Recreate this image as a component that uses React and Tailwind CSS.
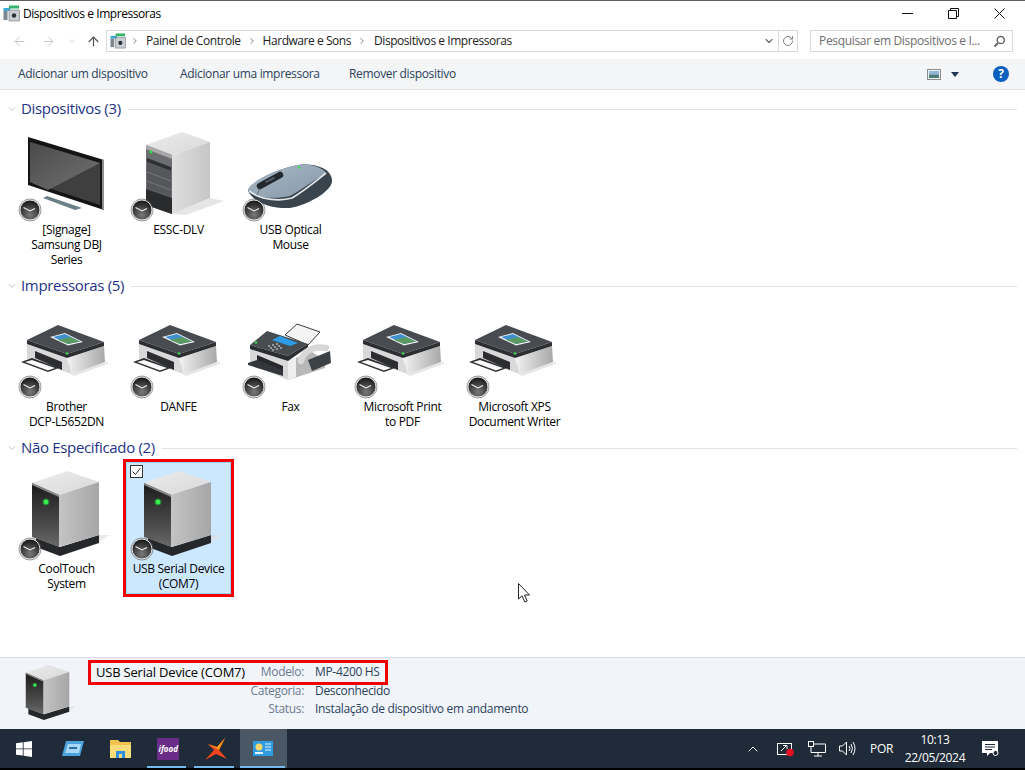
import React from 'react'
import { ArrowLeft, ArrowRight, ArrowUp, ChevronDown, ChevronRight, ChevronUp, RotateCw } from 'lucide-react'

const Defs = () => (
  <svg className="absolute w-0 h-0">
    <defs>
      <linearGradient id="screen" x1="0" y1="0" x2="1" y2="1">
        <stop offset="0" stopColor="#4a4a4a" />
        <stop offset="1" stopColor="#727272" />
      </linearGradient>
      <linearGradient id="side" x1="0" y1="0" x2="1" y2="0">
        <stop offset="0" stopColor="#c4c4c4" />
        <stop offset="1" stopColor="#a6a6a6" />
      </linearGradient>
      <linearGradient id="top" x1="0" y1="0" x2="1" y2="1">
        <stop offset="0" stopColor="#ececec" />
        <stop offset="1" stopColor="#d8d8da" />
      </linearGradient>
      <linearGradient id="front" x1="0" y1="0" x2="0" y2="1">
        <stop offset="0" stopColor="#1c1c1c" />
        <stop offset="0.7" stopColor="#4e4e4e" />
        <stop offset="1" stopColor="#6a6a6a" />
      </linearGradient>
      <linearGradient id="tower" x1="0" y1="0" x2="1" y2="0">
        <stop offset="0" stopColor="#dedede" />
        <stop offset="1" stopColor="#c6c6c6" />
      </linearGradient>
      <linearGradient id="printer" x1="0" y1="0" x2="1" y2="0">
        <stop offset="0" stopColor="#f2f2f2" />
        <stop offset="1" stopColor="#a8a8a8" />
      </linearGradient>
      <linearGradient id="mouse" x1="0" y1="0" x2="1" y2="1">
        <stop offset="0" stopColor="#a9b8c6" />
        <stop offset="1" stopColor="#8598a9" />
      </linearGradient>
      <radialGradient id="clock" cx="0.5" cy="0.75" r="0.75">
        <stop offset="0" stopColor="#7a7a7a" />
        <stop offset="1" stopColor="#121212" />
      </radialGradient>
    </defs>
  </svg>
)

const Badge = () => (
  <g>
    <circle cx="16" cy="87" r="10" fill="url(#clock)" stroke="#dcdcdc" strokeWidth="1" />
    <circle cx="16" cy="87" r="11" fill="none" stroke="#555" strokeWidth="0.6" />
    <path d="M9.5 84.5 L16 88 L21 85.5" fill="none" stroke="#f2f2f2" strokeWidth="1.1" />
  </g>
)

const MonitorIcon = () => (
  <svg width="106" height="100" viewBox="0 0 106 100" className="block">
    <polygon points="29,75 33,73 68,85 61,87" fill="#6d7f88" />
    <polygon points="14,14 90,37 90,87 14,62" fill="#141414" />
    <polygon points="88,37 90,37 90,87 88,86" fill="#8f8f8f" />
    <polygon points="16,19 86,40 86,82 16,59" fill="#3f3f3f" />
    <polygon points="16,19 86,40 34,67 16,59" fill="url(#screen)" />
    <Badge />
  </svg>
)

const ServerIcon = () => (
  <svg width="106" height="100" viewBox="0 0 106 100" className="block">
    <polygon points="46,91 84,75 98,78 60,92" fill="#e6e6e6" />
    <polygon points="20,22 56,9 84,19 46,32" fill="url(#top)" />
    <polygon points="46,32 84,19 84,75 46,91" fill="url(#tower)" />
    <polygon points="20,22 46,32 46,91 20,82" fill="#6b6d70" />
    <polygon points="20,22 46,32 46,36 20,26" fill="#a8a8a8" />
    <polygon points="21,35 45,44 45,48 21,39" fill="#2e3033" />
    <polygon points="21,39 45,48 45,74 21,66" fill="#55575b" />
    <path d="M21 49 L45 58 M21 58 L45 67" stroke="#7d7f83" strokeWidth="0.8" />
    <polygon points="20,66 46,75 46,91 20,82" fill="#2a2b2d" />
    <circle cx="25" cy="29" r="1.6" fill="#28e03a" />
    <Badge />
  </svg>
)

const MouseIcon = () => (
  <svg width="106" height="100" viewBox="0 0 106 100" className="block">
    <path d="M10 68 C16 56 40 46 60 42 C78 40 94 46 94 58 C94 68 70 82 52 85 C34 86 16 80 10 68 Z" fill="#3a444c" />
    <path d="M10 66 C16 56 40 46 60 42 C72 40 84 44 88 50 C78 56 66 65 52 73 C40 76 20 76 11 68 Z" fill="url(#mouse)" />
    <path d="M11 68 C24 78 44 78 54 75 C66 68 78 58 88 50" fill="none" stroke="#e2e8ec" strokeWidth="1.8" />
    <path d="M22 63 L42 52" stroke="#22282d" strokeWidth="6.5" strokeLinecap="round" />
    <path d="M28 59 L36 55" stroke="#59646c" strokeWidth="1.6" strokeLinecap="round" />
    <path d="M22 65 L19 72" stroke="#4d5962" strokeWidth="0.8" />
    <circle cx="61" cy="44.5" r="1.2" fill="#38e04c" />
    <Badge />
  </svg>
)

const PrinterIcon = () => (
  <svg width="106" height="100" viewBox="0 0 106 100" className="block">
    <polygon points="57,74 91,62 96,63 60,76" fill="#e6e6e6" />
    <polygon points="13,44 53,58 58,74 13,59" fill="#d9d9d9" />
    <polygon points="53,58 90,46 91,62 58,74" fill="url(#printer)" />
    <polygon points="21,51 48,62 48,70 21,58" fill="#2b2d30" />
    <polygon points="7,62 18,58 45,68 34,72" fill="#2b2d30" />
    <polygon points="11,62 18,60 41,68 34,70.5" fill="#f8f8f8" />
    <polygon points="13,40 44,25 90,42 53,54" fill="#484c50" />
    <polygon points="13,40 53,54 90,42 90,46 53,58 13,44" fill="#2c2e31" />
    <polygon points="36,37 51,33 69,42 54,45.5" fill="#f4f4f4" />
    <polygon points="39,37 51,34 66,41.5 54,44" fill="#3f8fcf" />
    <polygon points="44,40 56,37 66,41.5 54,44" fill="#5d9a62" />
    <circle cx="53" cy="53.5" r="1.2" fill="#2ee04a" />
    <Badge />
  </svg>
)

const FaxIcon = () => (
  <svg width="106" height="100" viewBox="0 0 106 100" className="block">
    <polygon points="47,35 59,24 82,32 70,45" fill="#f4f4f4" stroke="#3a3d40" strokeWidth="1" />
    <polygon points="12,49 50,61 50,80 12,64" fill="#d8d8d8" />
    <polygon points="50,61 74,52 87,60 87,68 50,80" fill="#b8b8b8" />
    <polygon points="50,61 58,58 58,77 50,80" fill="#efefef" />
    <polygon points="19,55 45,66 45,75 19,63" fill="#26282b" />
    <polygon points="10,63 19,60 45,70 45,76 10,65" fill="#33363a" />
    <polygon points="70,60 92,51 93,63 74,71" fill="#3c4145" />
    <path d="M63 61 C66 50 76 46 88 48" fill="none" stroke="#d8d8d8" strokeWidth="6.5" strokeLinecap="round" />
    <polygon points="12,45 29,31 70,44 50,56" fill="#474c51" />
    <polygon points="12,45 50,56 70,44 70,47 50,61 12,49" fill="#2b2e31" />
    <polygon points="34,40 42,36 60,43 52,46" fill="#2d9be6" />
    <path d="M30 46 h2 M34 45 h2 M38 44 h2 M32 48 h2 M36 47 h2 M40 46 h2 M34 50 h2 M38 49 h2 M42 48 h2" stroke="#dfe3e6" strokeWidth="1.2" />
    <circle cx="18" cy="42.5" r="1.2" fill="#2ee04a" />
    <Badge />
  </svg>
)

const DeviceIcon = ({ width = 106, height = 100, badge = true }) => (
  <svg width={width} height={height} viewBox="0 0 106 100" className="block">
    <polygon points="22,76 46,85 85,73 85,81 46,94 22,85" fill="#26272a" />
    <polygon points="85,73 96,73 85,80" fill="#dcdcdc" opacity="0.6" />
    <polygon points="18,21 53,9 85,20 45,33" fill="url(#top)" />
    <polygon points="45,33 85,20 85,73 45,85" fill="url(#side)" />
    <polygon points="18,21 45,33 45,85 18,75" fill="url(#front)" />
    <polygon points="18,21 45,33 45,35 18,23" fill="#8d8d8d" />
    <circle cx="32" cy="40" r="3.6" fill="#1fae35" opacity="0.55" />
    <circle cx="32" cy="40" r="2.4" fill="#38f04f" />
    {badge && <Badge />}
  </svg>
)

const groups = [
  {
    title: 'Dispositivos (3)',
    items: [
      { Icon: MonitorIcon, lines: ['[Signage]', 'Samsung DBJ', 'Series'] },
      { Icon: ServerIcon, lines: ['ESSC-DLV'] },
      { Icon: MouseIcon, lines: ['USB Optical', 'Mouse'] },
    ],
    tall: true,
  },
  {
    title: 'Impressoras (5)',
    items: [
      { Icon: PrinterIcon, lines: ['Brother', 'DCP-L5652DN'] },
      { Icon: PrinterIcon, lines: ['DANFE'] },
      { Icon: FaxIcon, lines: ['Fax'] },
      { Icon: PrinterIcon, lines: ['Microsoft Print', 'to PDF'] },
      { Icon: PrinterIcon, lines: ['Microsoft XPS', 'Document Writer'] },
    ],
  },
  {
    title: 'Não Especificado (2)',
    items: [
      { Icon: DeviceIcon, lines: ['CoolTouch', 'System'] },
      { Icon: DeviceIcon, lines: ['USB Serial Device', '(COM7)'], selected: true },
    ],
  },
]

const PanelGlyph = ({ size = 17 }) => (
  <svg width={size} height={size} viewBox="0 0 17 17" className="block">
    <rect x="0.5" y="3" width="7" height="3" fill="#3fa9d8" />
    <rect x="6" y="0.5" width="10" height="3" fill="#35b36a" />
    <rect x="0.5" y="6" width="4" height="9" fill="#7d8790" />
    <rect x="6" y="5" width="10.5" height="11" fill="#c9ced2" stroke="#6c757c" strokeWidth="0.6" />
    <circle cx="11" cy="10.5" r="2.2" fill="#2b3034" />
  </svg>
)

const Item = ({ Icon, lines, selected, tall }) => (
  <div className={`relative w-[105px] mr-[7px] ${tall ? 'h-[147px]' : 'h-[132px]'} ${selected ? 'bg-[#cce8ff] outline outline-1 -outline-offset-1 outline-[#99d1ff]' : ''}`}>
    <div className="h-[99px]">
      <Icon />
    </div>
    <div className="text-[12px] leading-[15px] text-center text-black whitespace-nowrap">
      {lines.map(line => (
        <div key={line}>{line}</div>
      ))}
    </div>
    {selected && (
      <>
        <div className="absolute left-[4px] top-[3px] w-[13px] h-[13px] bg-white border border-[#333] flex items-center justify-center">
          <svg width="11" height="11" viewBox="0 0 11 11">
            <path d="M1.5 5.5 L4.5 8.5 L9.5 2" fill="none" stroke="#333" strokeWidth="1" />
          </svg>
        </div>
        <div className="absolute -inset-[3px] border-[3px] border-[#f00000]" />
      </>
    )}
  </div>
)

const Group = ({ title, items, tall }) => (
  <section className="mb-[2px]">
    <div className="h-[28px] flex items-center pl-[6px] pr-[8px]">
      <ChevronDown className="w-[12px] h-[12px] text-[#8a8a8a] mr-[3px] shrink-0" strokeWidth={1} />
      <span className="text-[15px] text-[#1e3287] whitespace-nowrap -mt-[2px]">{title}</span>
      <div className="flex-1 h-px bg-[#e2e2e2] ml-[7px]" />
    </div>
    <div className="flex pl-[14px]">
      {items.map((item, i) => (
        <Item key={i} {...item} tall={tall} />
      ))}
    </div>
  </section>
)

const Crumb = () => <ChevronRight className="w-[10px] h-[10px] text-[#6d6d6d] mx-[6px] shrink-0" strokeWidth={2} />

const TaskButton = ({ children, active, running }) => (
  <div className={`relative w-[47.5px] h-full flex items-center justify-center ${active ? 'bg-[#4a5866]' : ''}`}>
    {children}
    {running && <div className={`absolute bottom-0 h-[2px] bg-[#76b9ed] ${active ? 'left-0 right-[2px]' : 'left-[2px] right-[6px]'}`} />}
  </div>
)

export default function App() {
  return (
    <div
      className="relative w-[1025px] h-[770px] overflow-hidden flex flex-col bg-white text-[12px] tracking-[-0.33px]"
      style={{ fontFamily: '"Open Sans", "Noto Sans", sans-serif' }}
    >
      <Defs />
      <div className="h-px bg-[#5f5f5f]" />

      {/* title bar */}
      <div className="h-[25px] flex items-center pl-[3px] pr-[3px]">
        <PanelGlyph />
        <span className="ml-[3px] text-black tracking-[-0.45px]">Dispositivos e Impressoras</span>
        <div className="ml-auto flex">
          <div className="w-[46px] flex justify-center">
            <svg width="11" height="11" viewBox="0 0 11 11"><path d="M0 5.5 H11" stroke="#111" /></svg>
          </div>
          <div className="w-[46px] flex justify-center">
            <svg width="11" height="11" viewBox="0 0 11 11">
              <path d="M0.5 2.5 H8.5 V10.5 H0.5 Z M2.5 2.5 V0.5 H10.5 V8.5 H8.5" fill="none" stroke="#111" />
            </svg>
          </div>
          <div className="w-[46px] flex justify-center">
            <svg width="11" height="11" viewBox="0 0 11 11"><path d="M0.5 0.5 L10.5 10.5 M10.5 0.5 L0.5 10.5" stroke="#111" /></svg>
          </div>
        </div>
      </div>

      {/* navigation */}
      <div className="h-[33px] flex items-start pt-[4px]">
        <div className="w-[106px] h-[22px] flex items-center shrink-0">
          <ArrowLeft className="w-[15px] h-[15px] ml-[12px] text-[#c8c8c8]" strokeWidth={1.6} />
          <ArrowRight className="w-[15px] h-[15px] ml-[14px] text-[#c8c8c8]" strokeWidth={1.6} />
          <ChevronDown className="w-[10px] h-[10px] ml-[11px] text-[#c8c8c8]" strokeWidth={2} />
          <ArrowUp className="w-[15px] h-[15px] ml-[9px] text-[#555]" strokeWidth={2} />
        </div>
        <div className="w-[692px] h-[22px] border border-[#d9d9d9] flex items-center tracking-[-0.45px]">
          <div className="ml-[3px] -mr-[2px]"><PanelGlyph size={16} /></div>
          <Crumb />
          <span className="text-[#222]">Painel de Controle</span>
          <Crumb />
          <span className="text-[#222]">Hardware e Sons</span>
          <Crumb />
          <span className="text-[#222] ml-[1px]">Dispositivos e Impressoras</span>
          <ChevronDown className="ml-auto w-[12px] h-[12px] text-[#666]" strokeWidth={2.2} />
          <div className="h-full w-px bg-[#d9d9d9] ml-[3px]" />
          <RotateCw className="w-[12px] h-[12px] mx-[3px] text-[#808080]" strokeWidth={2} />
        </div>
        <div className="w-[203px] h-[22px] ml-[12px] border border-[#d9d9d9] flex items-center pl-[8px] pr-[6px]">
          <span className="text-[#6d6d6d] whitespace-nowrap">Pesquisar em Dispositivos e I...</span>
          <svg width="13" height="13" viewBox="0 0 13 13" className="ml-auto">
            <circle cx="7.8" cy="5" r="3.6" fill="none" stroke="#666" strokeWidth="1.5" />
            <path d="M5 8 L1.5 11.5" stroke="#666" strokeWidth="2" />
          </svg>
        </div>
      </div>

      {/* toolbar */}
      <div className="h-[31px] bg-[#f3f5f6] border-b border-[#e2e2e2] flex items-center pl-[18px] pr-[16px] text-[#2b3f5c]">
        <span className="w-[162px]">Adicionar um dispositivo</span>
        <span className="w-[169px]">Adicionar uma impressora</span>
        <span>Remover dispositivo</span>
        <svg width="14" height="11" viewBox="0 0 14 11" className="ml-auto">
          <rect x="0.5" y="0.5" width="13" height="10" fill="#eef2f5" stroke="#8c8c8c" />
          <rect x="2" y="2" width="10" height="3.5" fill="#8fb7d8" />
          <rect x="2" y="5.5" width="10" height="3.5" fill="#4e7a78" />
        </svg>
        <svg width="8" height="5" viewBox="0 0 8 5" className="ml-[10px]">
          <path d="M0 0 H8 L4 5 Z" fill="#1d3557" />
        </svg>
        <div className="ml-[34px] w-[16px] h-[16px] rounded-full bg-[#0b5fbf] text-white text-[12px] font-bold flex items-center justify-center">?</div>
      </div>

      {/* content */}
      <div className="flex-1 pt-[5px]">
        {groups.map(g => (
          <Group key={g.title} title={g.title} items={g.items} tall={g.tall} />
        ))}
      </div>

      {/* details pane */}
      <div className="relative h-[72px] bg-[#f1f5fa] border-t border-[#d8dde3] flex pl-[14px]">
        <div className="pt-[1px]">
          <DeviceIcon width={69} height={65} badge={false} />
        </div>
        <div className="ml-[13px] pt-[5px] grid grid-cols-[208px_auto] gap-x-[11px] auto-rows-[18.5px] items-center">
          <div className="flex justify-between">
            <span className="text-black text-[13px] tracking-[-0.2px]">USB Serial Device (COM7)</span>
            <span className="text-[#6b7a90]">Modelo:</span>
          </div>
          <span className="text-[#2b3f5c]">MP-4200 HS</span>
          <span className="text-right text-[#6b7a90]">Categoria:</span>
          <span className="text-[#2b3f5c]">Desconhecido</span>
          <span className="text-right text-[#6b7a90]">Status:</span>
          <span className="text-[#2b3f5c]">Instalação de dispositivo em andamento</span>
        </div>
        <div className="absolute left-[88px] top-[2px] w-[300px] h-[25px] border-[3px] border-[#f00000]" />
      </div>

      {/* taskbar */}
      <div className="h-[39px] bg-[#1f2b38] flex items-stretch text-white">
        <div className="w-[48px] flex items-center justify-center">
          <svg width="16" height="16" viewBox="0 0 16 16">
            <path d="M0 2.3 L6.8 1.3 V7.5 H0 Z M7.6 1.2 L16 0 V7.5 H7.6 Z M0 8.3 H6.8 V14.6 L0 13.7 Z M7.6 8.3 H16 V16 L7.6 14.8 Z" fill="#fff" />
          </svg>
        </div>
        <div className="ml-[1.5px] flex">
          <TaskButton>
            <svg width="22" height="15" viewBox="0 0 22 15">
              <polygon points="4,0 22,0 18,15 0,15" fill="#4aa3dd" />
              <polygon points="6,3 19,3 17,12 3,12" fill="#a9d8f5" />
              <rect x="7" y="6" width="8" height="2" fill="#2a6ea8" />
            </svg>
          </TaskButton>
          <TaskButton>
            <svg width="21" height="19" viewBox="0 0 21 19">
              <path d="M0 1 H8 L10 3 H21 V19 H0 Z" fill="#f0c24d" />
              <rect x="0" y="6" width="21" height="13" fill="#fbdc7a" />
              <rect x="6" y="12" width="9" height="7" fill="#2f8fdc" />
              <rect x="9" y="15" width="3" height="4" fill="#fbdc7a" />
            </svg>
          </TaskButton>
          <TaskButton running>
            <div className="w-[22px] h-[22px] bg-[#6b2c87] flex items-center justify-center text-[8px] font-bold italic tracking-normal">ifood</div>
          </TaskButton>
          <TaskButton running>
            <svg width="22" height="22" viewBox="0 0 22 22">
              <path d="M3 6 L12 9 L20 0 L14 12 L22 21 L11 16 L0 22 L9 12 Z" fill="#f0451e" />
              <path d="M3 6 L12 9 L20 0 L14 12 Z" fill="#f7941d" />
            </svg>
          </TaskButton>
          <TaskButton active running>
            <svg width="20" height="15" viewBox="0 0 20 15">
              <rect width="20" height="15" fill="#2f9be0" />
              <circle cx="6" cy="6" r="3.5" fill="#f5d76e" />
              <path d="M12 3 H18 M12 6 H18 M12 9 H18" stroke="#e6f4ff" strokeWidth="1.2" />
              <rect x="2" y="11" width="8" height="2" fill="#e6f4ff" />
            </svg>
          </TaskButton>
        </div>
        <div className="ml-auto flex items-center w-[280px] shrink-0">
          <ChevronUp className="w-[16px] h-[16px]" strokeWidth={1.5} />
          <svg width="18" height="17" viewBox="0 0 18 17" className="ml-[16px]">
            <rect x="0.5" y="3.5" width="14" height="11" fill="none" stroke="#fff" />
            <path d="M4 11 L9 6 M6 5.5 H10 V9" fill="none" stroke="#fff" />
            <circle cx="13" cy="12.5" r="3.8" fill="#e81123" />
          </svg>
          <svg width="18" height="16" viewBox="0 0 18 16" className="ml-[13px]">
            <rect x="0.5" y="0.5" width="5" height="5" fill="#1f2b38" stroke="#fff" />
            <path d="M6 3 H17.5 V11.5 H3 V6 M10 11.5 V15 M6 15 H14" fill="none" stroke="#fff" />
          </svg>
          <svg width="17" height="15" viewBox="0 0 17 15" className="ml-[13px]">
            <path d="M0.5 5 H3.5 L7.5 1 V14 L3.5 10 H0.5 Z M10 5 Q12 7.5 10 10 M12 3 Q15 7.5 12 12 M14 1 Q18 7.5 14 14" fill="none" stroke="#fff" />
          </svg>
          <span className="ml-[14px]">POR</span>
          <div className="ml-[7px] w-[70px] text-center leading-[18px]">
            <div>10:13</div>
            <div>22/05/2024</div>
          </div>
          <svg width="17" height="16" viewBox="0 0 17 16" className="ml-[12px]">
            <path d="M0 0 H16 V12 H8 L5 15 V12 H0 Z" fill="#fff" />
            <path d="M3 3.5 H13 M3 6 H13 M3 8.5 H10" stroke="#1f2b38" />
            <circle cx="13.5" cy="12" r="2.5" fill="#1f2b38" stroke="#fff" />
          </svg>
        </div>
      </div>
      <div className="h-[2px] bg-black" />

      {/* mouse pointer */}
      <svg width="13" height="20" viewBox="0 0 13 20" className="absolute left-[518px] top-[583px]">
        <path d="M0.5 0.5 V16 L4 12.8 L6.8 19 L9.2 18 L6.5 12 H11.5 Z" fill="#fff" stroke="#222" />
      </svg>
    </div>
  )
}
